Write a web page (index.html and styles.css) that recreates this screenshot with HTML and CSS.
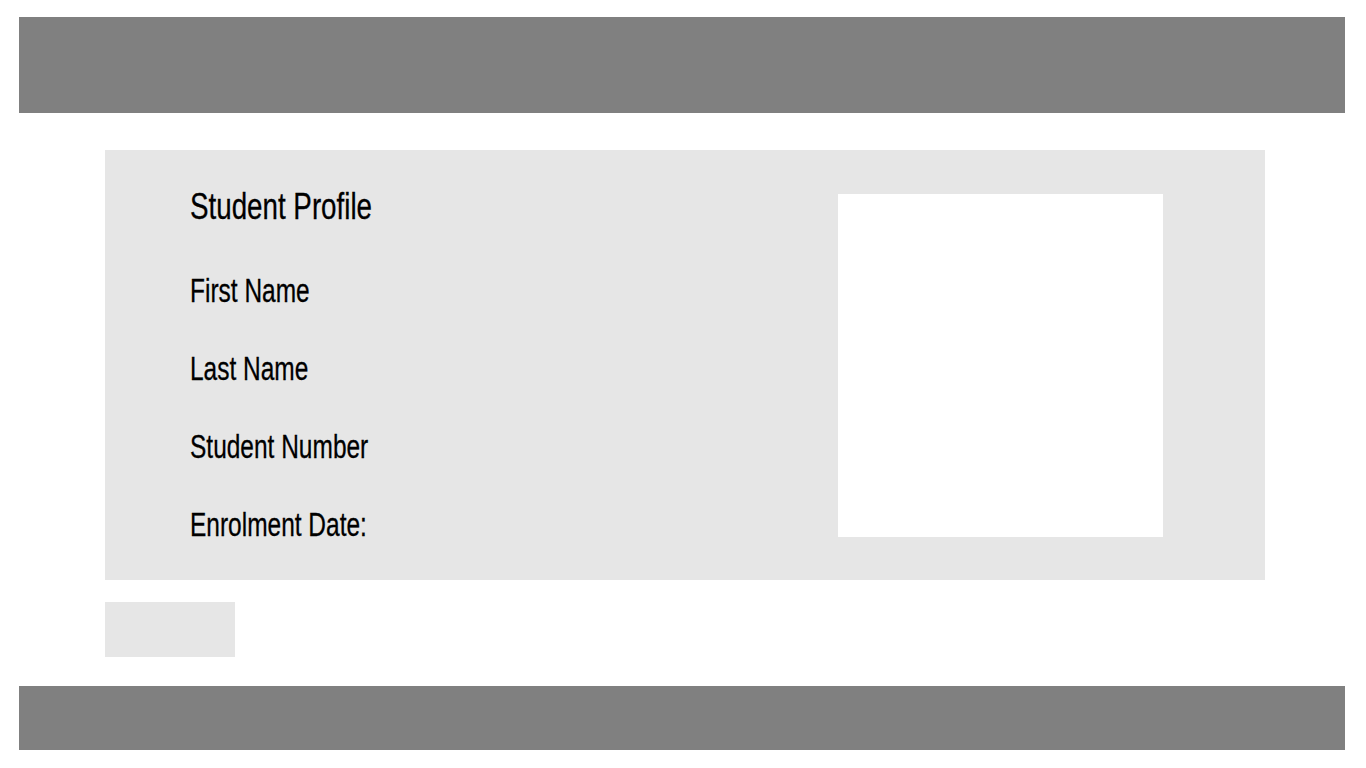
FILE: index.html
```html
<!DOCTYPE html>
<html lang="en">
<head>
<meta charset="utf-8">
<title>Student Profile</title>
<link rel="stylesheet" href="styles.css">
</head>
<body>
<div class="page">
  <header class="topbar"></header>
  <main class="main">
    <section class="card">
      <div class="info">
        <h1 class="title"><span class="narrow">Student Profile</span></h1>
        <p class="label first"><span class="narrow">First Name</span></p>
        <p class="label"><span class="narrow">Last Name</span></p>
        <p class="label"><span class="narrow">Student Number</span></p>
        <p class="label"><span class="narrow">Enrolment Date:</span></p>
      </div>
      <div class="photo"></div>
    </section>
    <div class="button"></div>
  </main>
  <footer class="bottombar"></footer>
</div>
</body>
</html>
```
FILE: styles.css
```css
html, body {
  margin: 0;
  padding: 0;
  background: #ffffff;
}
.page {
  padding: 17px 21px 18px 19px;
}
.topbar {
  height: 96px;
  background: #808080;
}
.main {
  padding: 37px 80px 0 86px;
}
.card {
  height: 430px;
  box-sizing: border-box;
  background: #e6e6e6;
  display: flex;
  justify-content: space-between;
  align-items: flex-start;
  padding: 37px 102px 0 85px;
}
.info {
  font-family: "Liberation Sans", Arial, sans-serif;
  color: #000;
  -webkit-text-stroke: 0.3px #000;
}
.narrow {
  display: inline-block;
  white-space: nowrap;
  transform-origin: left center;
  transform: scaleX(0.72);
}
.title {
  margin: 0;
  font-weight: normal;
  font-size: 37px;
  line-height: 40px;
}
.title .narrow {
  transform: scaleX(0.75);
}
.label {
  margin: 38px 0 0 0;
  font-size: 34px;
  line-height: 40px;
}
.label.first {
  margin-top: 43px;
}
.photo {
  margin-top: 7px;
  width: 325px;
  height: 343px;
  background: #ffffff;
}
.button {
  margin-top: 22px;
  width: 130px;
  height: 55px;
  background: #e6e6e6;
}
.bottombar {
  margin-top: 29px;
  height: 64px;
  background: #808080;
}
```
